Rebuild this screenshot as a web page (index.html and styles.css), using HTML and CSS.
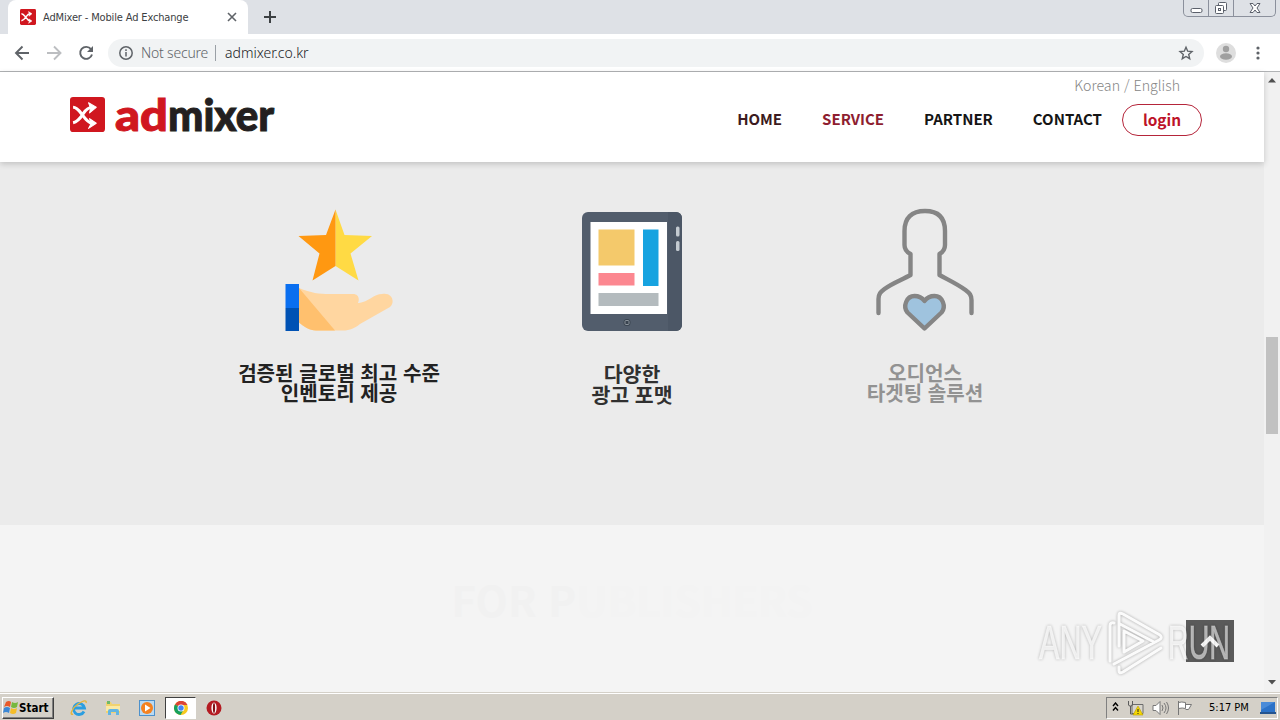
FILE: index.html
```html
<!DOCTYPE html>
<html lang="ko">
<head>
    <meta charset="UTF-8">
    <title>AdMixer - Mobile Ad Exchange</title>
    <link rel="stylesheet" href="styles.css">
</head>
<body>
    <!-- Browser tabs -->
    <div class="tab-strip">
        <div class="tab">
            <svg class="favicon" width="16" height="16" viewBox="0 0 34 34"><use href="#mixer"/></svg>
            <span class="tab-title">AdMixer - Mobile Ad Exchange</span>
            <svg class="tab-close" width="10" height="10" viewBox="0 0 10 10"><path d="M1 1l8 8M9 1l-8 8" stroke="#5f6368" stroke-width="1.6"/></svg>
        </div>
        <svg class="new-tab" width="12" height="12" viewBox="0 0 12 12"><path d="M6 0v12M0 6h12" stroke="#3c4043" stroke-width="2"/></svg>
        <div class="window-buttons">
            <span class="win-btn"><svg width="13" height="16"><rect x="1" y="8.5" width="11" height="4" rx="1.5" fill="#fff" stroke="#5b606b"/></svg></span>
            <span class="win-btn"><svg width="14" height="16" fill="#fff" stroke="#5b606b"><rect x="4.5" y="2.5" width="8" height="8" rx="1"/><rect x="1.5" y="5.5" width="8" height="8" rx="1"/><rect x="4.5" y="8.5" width="2" height="2"/></svg></span>
            <span class="win-btn wide"><svg width="12" height="16"><path d="M1 3.5h3l2 2.5 2-2.5h3L8 8l3 4.5H8L6 10l-2 2.5H1L4 8z" fill="#fff" stroke="#5b606b"/></svg></span>
        </div>
    </div>

    <div class="toolbar">
        <svg width="100" height="20" viewBox="0 0 100 20" fill="none" stroke-width="1.9">
            <path d="M29 10H16.5M22.5 3.5L16 10l6.5 6.5" stroke="#5f6368"/>
            <path d="M47 10h12.5M54 3.5l6.500 6.500-6.500 6.500" stroke="#bcbec1"/>
            <path d="M91 6.200A6 6 0 1 0 92 11.500" stroke="#5f6368"/>
            <path d="M93 3v6h-6z" fill="#5f6368"/>
        </svg>
        <div class="omnibox">
            <svg width="16" height="16" viewBox="0 0 16 16"><circle cx="8" cy="8" r="6.2" fill="none" stroke="#5f6368" stroke-width="1.5"/><path d="M8 7v4.500M8 4.300v1.600" stroke="#5f6368" stroke-width="1.5"/></svg>
            <span class="not-secure">Not secure</span>
            <span class="divider"></span>
            <span class="url">admixer.co.kr</span>
            <svg class="star" width="16" height="16" viewBox="0 0 16 16"><path d="M8 2.200l1.700 4 4.300.4-3.300 2.900 1 4.200L8 11.500l-3.700 2.200 1-4.200L2 6.600l4.300-.4z" fill="none" stroke="#5f6368" stroke-width="1.4"/></svg>
        </div>
        <svg class="avatar" width="20" height="20" viewBox="0 0 20 20"><circle cx="10" cy="10" r="10" fill="#dedede"/><circle cx="10" cy="6" r="3.2" fill="#a0a0a0"/><ellipse cx="10" cy="13.5" rx="6" ry="3.2" fill="#a0a0a0"/></svg>
        <svg width="4" height="14" fill="#5f6368"><circle cx="2" cy="2" r="1.6"/><circle cx="2" cy="7" r="1.6"/><circle cx="2" cy="12" r="1.6"/></svg>
    </div>

    <div class="viewport">
        <div class="page">
            <header class="header">
                <a class="logo">
                    <svg width="35" height="35" viewBox="0 0 34 34">
                        <g id="mixer">
                            <rect width="34" height="34" rx="3" fill="#d0171f"/>
                            <path d="M3 10c3 0 5 2 8 6s6 9 11 10M3 25c5-1 8-6 10-9s5-6 9-6" fill="none" stroke="#fff" stroke-width="3"/>
                            <path d="M18 5.500l7.500 4.500-6.500 5.500 1-4.500zM19 21l6.500 4.500-7.500 5 2.500-4.500z" fill="#fff" stroke="#fff" stroke-linejoin="round"/>
                        </g>
                    </svg>
                    <svg class="wordmark" width="162" height="60" viewBox="0 0 162 60">
                        <text x="1" y="45.500" textLength="53" lengthAdjust="spacingAndGlyphs" fill="#d0171f" stroke="#d0171f">ad</text>
                        <text x="54" y="45.500" textLength="106" lengthAdjust="spacingAndGlyphs" fill="#231f20" stroke="#231f20">mixer</text>
                    </svg>
                </a>
                <div class="header-right">
                    <div class="lang">Korean / English</div>
                    <nav class="nav">
                        <a class="home">HOME</a>
                        <a class="active">SERVICE</a>
                        <a>PARTNER</a>
                        <a>CONTACT</a>
                        <a class="login">login</a>
                    </nav>
                </div>
            </header>

            <section class="features">
                <div class="feature">
                    <svg width="108" height="124" viewBox="285 208 108 124">
                        <path d="M335.5 209.5l9 25.5 27.5 1-21.5 17.5 8 27-23-14.5z" fill="#ffda44"/>
                        <path d="M335.5 209.5l-9.5 25.5-27.5 1 21 17.5-7 27 23-14.5z" fill="#ff9811"/>
                        <path d="M299 288c12 5 20 6 31 6h23c5 0 7 4 5 9h1c9-1 15-9 23-9 9-2 14 7 8 13l-30 17c-5 4-10 6.500-17 6.500h-27c-7 0-12-4-17-8z" fill="#ffd6a0"/>
                        <path d="M299 288l36 42.500h-19c-7 0-12-4-17-8z" fill="#ffc06e"/>
                        <path d="M285.5 284H299v24h-13.500z" fill="#0a6ff0"/>
                        <path d="M285.5 308H299v23h-13.500z" fill="#0052b4"/>
                    </svg>
                    <h3>검증된 글로벌 최고 수준<br>인벤토리 제공</h3>
                </div>
                <div class="feature format">
                    <svg width="100" height="124" viewBox="582 208 100 124">
                        <rect x="582" y="212" width="100" height="119" rx="6" fill="#525d6c"/>
                        <path d="M668 212h8a6 6 0 0 1 6 6v107a6 6 0 0 1-6 6h-8z" fill="#4c5766"/>
                        <path d="M590.5 222H667v92h-76.500z" fill="#fff"/>
                        <path d="M598.5 229.500h36v36h-36z" fill="#f4c96b"/>
                        <path d="M643 229.500h15.500V286H643z" fill="#17a3e0"/>
                        <path d="M598.5 273h36v12.500h-36z" fill="#fc8790"/>
                        <path d="M598.5 293h60v13h-60z" fill="#b4bbbe"/>
                        <rect x="676" y="226.5" width="3.5" height="10" rx="1.5" fill="#c4cbd1"/>
                        <rect x="676" y="241" width="3.5" height="10" rx="1.5" fill="#c4cbd1"/>
                        <circle cx="627" cy="322.5" r="3.5" fill="#39434f"/>
                        <rect x="625" y="320.5" width="4" height="4" rx="1" fill="none" stroke="#8b939b"/>
                    </svg>
                    <h3>다양한<br>광고 포맷</h3>
                </div>
                <div class="feature audience">
                    <svg width="98" height="124" viewBox="876 208 98 124" fill="none" stroke="#858585" stroke-width="4.4" stroke-linejoin="round" stroke-linecap="round">
                        <path d="M878.5 313v-14c0-5 2-7 6-10 8-6 17-9 26-14v-21c-4-2-6-5-6-9v-14c0-13 7-20 20.500-20s20 7 20 20v14c0 4-2 7-5.500 9v21c9 5 18 9 26 15 4 3 6 5 6 10v13"/>
                        <path d="M924.5 328.500l-17-16c-5-6-1-16.500 7-16.500 4 0 7 1 10 5 3-4 6-5 10-5 8 0 12 10.500 7 16.500z" fill="#9fc3de"/>
                    </svg>
                    <h3>오디언스<br>타겟팅 솔루션</h3>
                </div>
            </section>

            <section class="partners">
                <h2>FOR P<span>UBLISHERS</span></h2>
            </section>

            <div class="to-top">
                <svg width="20" height="14" viewBox="0 0 20 14"><path d="M2 12l8-8 8 8" fill="none" stroke="#fff" stroke-width="4"/></svg>
            </div>
            <svg class="watermark" width="204" height="80" viewBox="0 0 204 80">
                <g fill="none" stroke="#fff" stroke-width="3" stroke-linejoin="round" stroke-linecap="round">
                    <path d="M73 57V22q0-4 4-3M82 42V11q0-3 4-1l37 21q3 3-1 5L77 60M83 20l34 18M87 27v21l19-11-19-10M82 63v4q0 3 4 1l38-24"/>
                </g>
                <text x="2" y="55" textLength="63" lengthAdjust="spacingAndGlyphs">ANY</text>
                <text x="131" y="55" textLength="62" lengthAdjust="spacingAndGlyphs">RUN</text>
            </svg>
        </div>
        <div class="scrollbar">
            <svg width="8" height="5"><path d="M0 4.500h8L4 0z" fill="#505050"/></svg>
            <div class="thumb"></div>
            <svg width="8" height="5"><path d="M0 0h8L4 4.500z" fill="#505050"/></svg>
        </div>
    </div>

    <div class="taskbar">
        <div class="start">
            <svg width="16" height="16" viewBox="0 0 16 16">
                <path d="M3 2q3-2 5 0L7 7Q4 5 1 7z" fill="#e8592a"/><path d="M9 2q3 2 6 0l-1 5q-3 2-6 0z" fill="#76b83f"/>
                <path d="M1 8q3-2 6 0l-1 5q-3-2-6 0z" fill="#3b87d5"/><path d="M8 8q3 2 6 0l-1 5q-3 2-6 0z" fill="#f5bd29"/>
            </svg>
            <span>Start</span>
        </div>
        <div class="launch">
            <svg width="18" height="18" viewBox="0 0 18 18"><path d="M14 12.500A5.500 5.500 0 1 1 14.500 9H5" fill="none" stroke="#2b9ee0" stroke-width="2.8"/><path d="M3 15C-1 17 2 9 8 5s9-4 8-1" fill="none" stroke="#e6b53b" stroke-width="1.4"/></svg>
        </div>
        <div class="launch">
            <svg width="18" height="18" viewBox="0 0 18 18"><path d="M2 3h5l1 2h8v9H2z" fill="#f1d26e"/><path d="M3 2h3v3H3z" fill="#6fb868"/><path d="M2 7h14v5H2z" fill="#fae9a5"/><path d="M4 16v-4q0-2 2-2h7q2 0 2 2v4h-3v-3H7v3z" fill="#62b5e2"/></svg>
        </div>
        <div class="launch">
            <svg width="18" height="18" viewBox="0 0 18 18"><rect x="1.5" y="1.5" width="15" height="15" fill="#b9daf3" stroke="#4d91cc"/><circle cx="9" cy="9" r="6" fill="#f58220"/><path d="M7 5.500l5.500 3.500L7 12.500z" fill="#fff"/></svg>
        </div>
        <div class="launch pressed">
            <svg width="14" height="14" viewBox="1 1 14 14"><circle cx="8" cy="8" r="7" fill="#f7c920"/><path d="M8 8L2 4.400A7 7 0 0 1 14.500 5H8z" fill="#db4437"/><path d="M8 8L2 4.400A7 7 0 0 0 7.500 15l3-5z" fill="#16a05d"/><circle cx="8" cy="8" r="3.5" fill="#fff"/><circle cx="8" cy="8" r="2.7" fill="#4285f4"/></svg>
        </div>
        <div class="launch">
            <svg width="16" height="16" viewBox="0 0 16 16"><circle cx="8" cy="8" r="7.5" fill="#b41b22"/><ellipse cx="8" cy="8" rx="2.6" ry="5.5" fill="#fff"/><ellipse cx="8" cy="8" rx="1.1" ry="5" fill="#821014"/></svg>
        </div>
        <div class="tray">
            <svg width="7" height="12" viewBox="0 0 7 12"><path d="M1 4l2.500-3L6 4M1 8.500l2.500-3 2.500 3" fill="none" stroke="#000" stroke-width="1.4"/></svg>
            <svg width="17" height="16" viewBox="0 0 17 16"><path d="M5 4.500h11v9H5z" fill="#d8d5cd" stroke="#6c6c6c"/><path d="M1.500 1v4q0 1 2 1t2-1V1M3.500 6v8H8" fill="none" stroke="#5c5c5c"/><path d="M11 6l5 9H6z" fill="#f5d800" stroke="#b89b00" stroke-width=".6"/><path d="M11 9v3M11 13v1" stroke="#222"/></svg>
            <svg width="17" height="16" viewBox="0 0 17 16" fill="none" stroke="#777"><path d="M1 5.500h3l4-4v13l-4-4H1z" fill="#fff"/><path d="M10 5q2 3 0 6M12 3q4 5 0 10M14.500 2q4 6 0 12"/></svg>
            <svg width="17" height="16" viewBox="0 0 17 16"><path d="M1.500 1v14M1.500 2.500q3-1 7 0v6q-3-1-7 0M8.500 4.500h6l-3 5h-3" fill="#fff" stroke="#777"/></svg>
            <span class="clock">5:17 PM</span>
            <svg width="16" height="14" viewBox="0 0 16 14"><path d="M1 1h14v10H1z" fill="#2c72c8"/><path d="M1 1h14L1 9z" fill="#4a8bd8"/><path d="M0 11h16v2H0z" fill="#25548f"/></svg>
        </div>
    </div>
</body>
</html>
```
FILE: styles.css
```css
* {
    box-sizing: border-box;
}

body {
    margin: 0;
    width: 1280px;
    height: 720px;
    overflow: hidden;
    display: flex;
    flex-direction: column;
    font-family: "Noto Sans CJK KR", sans-serif;
    background: #fff;
}

svg {
    display: block;
    flex: none;
}

/* Browser chrome */
.tab-strip {
    height: 34px;
    flex: none;
    background: #dee1e6;
    display: flex;
    padding-left: 8px;
}

.tab {
    width: 240px;
    display: flex;
    align-items: center;
    padding: 0 11px 0 12px;
    background: #fff;
    border-radius: 8px 8px 0 0;
}

.tab-title {
    flex: 1;
    margin-left: 7px;
    font: 11px "DejaVu Sans Condensed", "DejaVu Sans", sans-serif;
    letter-spacing: -0.15px;
    color: #3c4043;
    white-space: nowrap;
}

.new-tab {
    margin: 11px 0 0 16px;
}

.window-buttons {
    display: flex;
    height: 17px;
    margin: 0 4px 0 auto;
    border: 1px solid #8b909c;
    border-top: none;
    border-radius: 0 0 5px 5px;
}

.win-btn {
    width: 25px;
    display: flex;
    justify-content: center;
    border-right: 1px solid #8b909c;
}

.win-btn.wide {
    width: 41px;
    border-right: none;
}

.toolbar {
    height: 38px;
    flex: none;
    display: flex;
    align-items: center;
    border-bottom: 1px solid #b1b3b5;
    padding: 0 20px 0 0;
}

.omnibox {
    width: 1096px;
    height: 28px;
    margin-left: 8px;
    padding: 0 10px;
    display: flex;
    align-items: center;
    border-radius: 14px;
    background: #f1f3f4;
    font: 300 14px "Noto Sans", sans-serif;
}

.not-secure {
    margin-left: 7px;
    width: 67px;
    letter-spacing: -0.2px;
    color: #5f6368;
    white-space: nowrap;
}

.divider {
    width: 1px;
    height: 16px;
    margin: 0 9px 0 7px;
    background: #9aa0a6;
}

.url {
    color: #202124;
}

.star {
    margin-left: auto;
}

.avatar {
    margin: 0 20px 0 12px;
}

/* Page */
.viewport {
    height: 620px;
    flex: none;
    display: flex;
}

.page {
    width: 1264px;
    position: relative;
    background: #f4f4f4;
}

.header {
    height: 90px;
    position: relative;
    display: flex;
    justify-content: space-between;
    padding: 0 62px 0 70px;
    background: #fff;
    box-shadow: 0 2px 6px rgba(0, 0, 0, 0.18);
}

.logo {
    display: flex;
    align-items: center;
    height: 85px;
}

/* baseline sits on the bottom edge of the mark */
.wordmark {
    margin: 0 0 0 9px;
    font: 900 43px Lato, sans-serif;
    stroke-width: 1px;
}

.lang {
    height: 26px;
    padding-right: 22px;
    text-align: right;
    font-size: 14.2px;
    font-weight: 300;
    line-height: 26px;
    color: #858585;
}

.nav {
    display: flex;
    align-items: center;
    justify-content: flex-end;
    height: 44px;
    gap: 40px;
    font-size: 15px;
    font-weight: 700;
    line-height: 22px;
    color: #151515;
}

.nav a {
    padding-bottom: 2px;
}

.nav .home {
    color: #3c1a20;
}

.nav .active {
    color: #8e1e30;
}

.nav .login {
    width: 80px;
    height: 32px;
    margin-left: -20px;
    border: 1px solid #b5253a;
    border-radius: 16px;
    font-size: 15.4px;
    line-height: 29px;
    text-align: center;
    color: #bd1329;
}

.features {
    height: 363px;
    display: flex;
    justify-content: center;
    padding-top: 46px;
    background: #ebebeb;
}

.feature {
    width: 293px;
    display: flex;
    flex-direction: column;
    align-items: center;
}

.feature h3 {
    margin: 31px 0 0;
    font-size: 20.1px;
    font-weight: 700;
    line-height: 20.4px;
    text-align: center;
    color: #222;
}

.feature.format h3 {
    margin-top: 31px;
    font-size: 20.5px;
    line-height: 21px;
    color: #303030;
}

.feature.audience h3 {
    color: #929292;
}

.partners {
    height: 167px;
    padding-top: 42px;
}

.partners h2 {
    margin: 0;
    font-size: 42px;
    line-height: 64px;
    text-align: center;
    color: #f1f1f1;
}

.partners span {
    color: #f3f3f3;
}

.to-top {
    position: absolute;
    left: 1186px;
    top: 548px;
    width: 48px;
    height: 42px;
    display: flex;
    align-items: center;
    justify-content: center;
    background: #5a5a5a;
}

.watermark {
    position: absolute;
    left: 1037px;
    top: 532px;
    opacity: 0.7;
    font: 48px "Liberation Sans", sans-serif;
    filter: drop-shadow(0 0 1.5px rgba(0, 0, 0, 0.45));
}

.watermark text {
    fill: #fff;
    fill-opacity: 0.8;
    stroke: #fff;
    stroke-opacity: 0.5;
    stroke-width: 1px;
}

.scrollbar {
    width: 16px;
    display: flex;
    flex-direction: column;
    align-items: center;
    background: #f1f1f1;
    padding: 6px 0 7px;
}

.thumb {
    width: 12px;
    height: 97px;
    margin: 254px 0 auto 0;
    background: #c1c1c1;
}

/* Taskbar */
.taskbar {
    flex: none;
    height: 28px;
    display: flex;
    align-items: center;
    padding: 2px 0 0 2px;
    background: #d4d0c8;
    border-top: 1px solid #d4d0c8;
    box-shadow: inset 0 1px #fff;
}

.start {
    width: 52px;
    height: 22px;
    margin-right: 8px;
    display: flex;
    align-items: center;
    border: 1px solid;
    border-color: #fff #404040 #404040 #fff;
    box-shadow: inset -1px -1px #808080;
    font: bold 11.5px "DejaVu Sans Condensed", "DejaVu Sans", sans-serif;
}

.launch {
    width: 34px;
    height: 22px;
    display: flex;
    align-items: center;
    justify-content: center;
}

.launch.pressed {
    width: 31px;
    margin: 0 1px 0 1px;
    background: #fff;
    border: 1px solid;
    border-color: #404040 #fff #fff #404040;
}

.tray {
    width: 172px;
    height: 22px;
    margin: 0 2px 0 auto;
    padding: 0 1px 0 5px;
    display: flex;
    align-items: center;
    border: 1px solid;
    border-color: #808080 #fff #fff #808080;
}

.tray svg + svg {
    margin-left: 8px;
}

.clock {
    margin: 0 11px 0 15px;
    font: 11px "DejaVu Sans Condensed", "DejaVu Sans", sans-serif;
    white-space: nowrap;
}
```
